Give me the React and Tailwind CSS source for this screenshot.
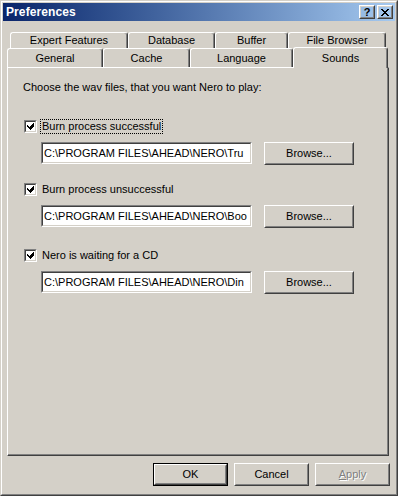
import React from "react";

const face = "bg-[#d4d0c8]";

function Raised({ className = "", children, isDefault = false, disabled = false }) {
  const inner = (
    <div className="h-full w-full border border-t-white border-l-white border-b-[#404040] border-r-[#404040]">
      <div className="h-full w-full border border-t-[#d4d0c8] border-l-[#d4d0c8] border-b-[#808080] border-r-[#808080] flex items-center justify-center">
        <span className={disabled ? "text-[#808080] [text-shadow:1px_1px_0_#ffffff]" : "text-black"}>{children}</span>
      </div>
    </div>
  );
  if (isDefault) {
    return <div className={`border border-black ${className}`}>{inner}</div>;
  }
  return <div className={className}>{inner}</div>;
}

function Sunken({ className = "", children }) {
  return (
    <div className={`border border-t-[#808080] border-l-[#808080] border-b-white border-r-white ${className}`}>
      <div className="h-full w-full border border-t-[#404040] border-l-[#404040] border-b-[#d4d0c8] border-r-[#d4d0c8] bg-white overflow-hidden">
        {children}
      </div>
    </div>
  );
}

function CheckBox() {
  return (
    <Sunken className="w-[13px] h-[13px] shrink-0">
      <svg width="9" height="9" viewBox="0 0 9 9" className="block">
        <path d="M1 3h1v1h1v1h1V4h1V3h1V2h1V1h1v3H8v1H7v1H6v1H5v1H4V7H3V6H2V5H1z" fill="#000" />
      </svg>
    </Sunken>
  );
}

function Tab({ label, w, selected = false }) {
  if (selected) {
    return (
      <div
        className={`${w} h-[21px] -mb-px relative z-10 ${face} border-t border-l border-r border-t-white border-l-white border-r-[#404040] rounded-t-[3px] shadow-[inset_-1px_0_0_#808080] flex items-start justify-center pt-[2px]`}
      >
        {label}
      </div>
    );
  }
  return (
    <div
      className={`${w} h-full ${face} border-t border-l border-r border-t-white border-l-white border-r-[#404040] rounded-t-[3px] shadow-[inset_-1px_0_0_#808080] flex items-center justify-center`}
    >
      {label}
    </div>
  );
}

// the edit fields only show the start of the long path, as in the dialog
function SoundRow({ label, path, focused = false, mt }) {
  return (
    <div className={`flex flex-col ${mt}`}>
      <div className="flex items-center h-[15px] ml-[16px]">
        <CheckBox />
        <span
          className={`ml-[3px] px-[1px] leading-[13px] border border-dotted ${
            focused ? "border-black" : "border-transparent"
          }`}
        >
          {label}
        </span>
      </div>
      <div className="flex items-start mt-[8px] ml-[33px]">
        <Sunken className="w-[211px] h-[22px]">
          <div className="h-full flex items-center pl-[1px] whitespace-nowrap">{path}</div>
        </Sunken>
        <Raised className="w-[90px] h-[23px] ml-[12px]">Browse...</Raised>
      </div>
    </div>
  );
}

export default function App() {
  return (
    <div
      className="w-[398px] h-[496px] border border-t-[#d4d0c8] border-l-[#d4d0c8] border-b-[#404040] border-r-[#404040] text-[11px] text-black select-none"
      style={{ fontFamily: '"Liberation Sans", Arial, sans-serif' }}
    >
      <div className="h-full w-full border border-t-white border-l-white border-b-[#808080] border-r-[#808080]">
        <div className={`h-full w-full ${face} p-px flex flex-col`}>
          {/* title bar */}
          <div className="h-[18px] shrink-0 bg-gradient-to-r from-[#0a246a] to-[#a6caf0] flex items-center pl-[3px] pr-[2px]">
            <span className="text-white font-bold text-[12px] tracking-[0.1px]">Preferences</span>
            <div className="ml-auto flex gap-[2px]">
              <Raised className="w-[16px] h-[14px]">
                <span className="font-bold text-[11px] leading-none">?</span>
              </Raised>
              <Raised className="w-[16px] h-[14px]">
                <svg width="8" height="7" viewBox="0 0 8 7" className="block">
                  <path d="M0 0h2v1h1v1h2V1h1V0h2v1H7v1H6v1H5v1h1v1h1v1h1v1H6V6H5V5H3v1H2v1H0V6h1V5h1V4h1V3H2V2H1V1H0z" fill="#000" />
                </svg>
              </Raised>
            </div>
          </div>

          {/* tab rows */}
          <div className="mt-[11px] ml-[7px] h-[16px] flex">
            <Tab w="w-[118px]" label="Expert Features" />
            <Tab w="w-[87px]" label="Database" />
            <Tab w="w-[73px]" label="Buffer" />
            <Tab w="w-[98px]" label="File Browser" />
          </div>
          <div className="ml-[4px] h-[19px] flex items-end">
            <Tab w="w-[96px]" label="General" />
            <Tab w="w-[87px]" label="Cache" />
            <Tab w="w-[103px]" label="Language" />
            <Tab w="w-[95px]" label="Sounds" selected />
          </div>

          {/* panel */}
          <div className="ml-[4px] w-[382px] h-[389px] shrink-0 border border-t-white border-l-white border-b-[#404040] border-r-[#404040] shadow-[inset_-1px_-1px_0_#808080]">
            <div className="pt-[13px] pl-[15px] leading-[13px]">
              Choose the wav files, that you want Nero to play:
            </div>
            <SoundRow
              mt="mt-[25px]"
              focused
              label="Burn process successful"
              path="C:\PROGRAM FILES\AHEAD\NERO\Tru"
            />
            <SoundRow
              mt="mt-[17px]"
              label="Burn process unsuccessful"
              path="C:\PROGRAM FILES\AHEAD\NERO\Boo"
            />
            <SoundRow
              mt="mt-[20px]"
              label="Nero is waiting for a CD"
              path="C:\PROGRAM FILES\AHEAD\NERO\Din"
            />
          </div>

          {/* bottom buttons */}
          <div className="mt-[7px] flex justify-end pr-[5px] gap-[6px]">
            <Raised isDefault className="w-[75px] h-[23px]">OK</Raised>
            <Raised className="w-[75px] h-[23px]">Cancel</Raised>
            <Raised disabled className="w-[75px] h-[23px]">
              <span className="underline underline-offset-1">A</span>pply
            </Raised>
          </div>
        </div>
      </div>
    </div>
  );
}
